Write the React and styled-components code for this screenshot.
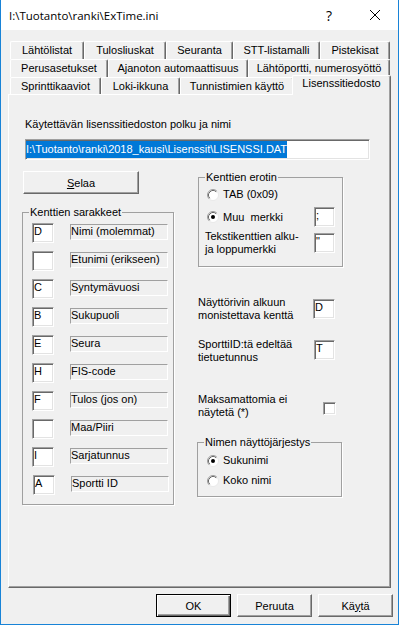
import React from 'react';
import styled, { createGlobalStyle } from 'styled-components';

const GlobalStyle = createGlobalStyle`
  html, body {
    margin: 0;
    padding: 0;
    background: #f0f0f0;
  }
  body {
    font-family: "Liberation Sans", Arial, sans-serif;
    font-size: 11px;
    color: #000;
  }
`;

const Window = styled.div`
  width: 399px;
  height: 625px;
  box-sizing: border-box;
  border: 1px solid #1883d7;
  border-top: none;
  background: #f0f0f0;
  display: flex;
  flex-direction: column;
`;

const TitleBar = styled.div`
  height: 30px;
  background: #fff;
  display: flex;
  align-items: center;
  font-family: "Open Sans", "Noto Sans", "DejaVu Sans", sans-serif;
  font-size: 11.5px;
`;

const Title = styled.div`
  flex: 1;
  padding-left: 8px;
  white-space: pre;
`;

const CaptionButton = styled.div`
  width: 46px;
  height: 30px;
  display: flex;
  align-items: center;
  justify-content: center;
  font-size: 14px;
`;

const Body = styled.div`
  padding: 11px 6px 0 7px;
  display: flex;
  flex-direction: column;
`;

const TabRow = styled.div`
  display: flex;
  height: ${p => p.$h || 18}px;
  padding-left: 2px;
`;

const Tab = styled.div`
  box-sizing: border-box;
  width: ${p => p.$w}px;
  height: ${p => (p.$selected ? p.$h + 3 : p.$h)}px;
  margin-top: ${p => (p.$selected ? -2 : 0)}px;
  margin-left: ${p => (p.$selected ? -2 : 0)}px;
  position: ${p => (p.$selected ? 'relative' : 'static')};
  z-index: ${p => (p.$selected ? 2 : 'auto')};
  background: #f0f0f0;
  border-top: 1px solid #fff;
  border-left: 1px solid #fff;
  border-right: 1px solid #696969;
  border-radius: 2px 2px 0 0;
  box-shadow: inset -1px 0 0 #a0a0a0;
  text-align: center;
  line-height: ${p => (p.$selected ? 15 : 17)}px;
  white-space: pre;
`;

const Panel = styled.div`
  box-sizing: border-box;
  width: 383px;
  height: 494px;
  border-top: 1px solid #fff;
  border-left: 1px solid #fff;
  border-right: 1px solid #696969;
  border-bottom: 1px solid #696969;
  box-shadow: inset -1px -1px 0 #a0a0a0;
  padding: 23px 0 0 13px;
`;

const PathLabel = styled.div`
  line-height: 13px;
  margin-left: 3px;
  margin-bottom: 8px;
`;

const Sunken = styled.div`
  box-sizing: border-box;
  background: #fff;
  border-style: solid;
  border-width: 1px;
  border-color: #a0a0a0 #fff #fff #a0a0a0;
  box-shadow: inset 1px 1px 0 #696969, inset -1px -1px 0 #e3e3e3;
  padding: 1px;
  line-height: 13px;
  white-space: pre;
`;

const PathInput = styled(Sunken)`
  width: 345px;
  height: 21px;
  margin-left: 3px;
  padding: 1px 0;
  line-height: 17px;
`;

const Selected = styled.span`
  display: inline-block;
  background: #0078d7;
  color: #fff;
  line-height: 17px;
`;

const Columns = styled.div`
  display: flex;
  gap: 24px;
  margin-top: 11px;
`;

const LeftCol = styled.div`
  width: 152px;
  display: flex;
  flex-direction: column;
`;

const RightCol = styled.div`
  width: 145px;
  display: flex;
  flex-direction: column;
`;

const Button = styled.button`
  box-sizing: border-box;
  width: ${p => p.$w || 75}px;
  height: 23px;
  margin: 0;
  padding: 0;
  font: inherit;
  color: #000;
  background: #f0f0f0;
  border-style: solid;
  border-width: 1px;
  border-color: ${p => (p.$default ? '#000' : '#fff #696969 #696969 #fff')};
  box-shadow: ${p =>
    p.$default
      ? 'inset 1px 1px 0 #fff, inset -1px -1px 0 #696969, inset -2px -2px 0 #a0a0a0'
      : 'inset -1px -1px 0 #a0a0a0'};
  display: flex;
  align-items: center;
  justify-content: center;
`;

const SelaaButton = styled(Button)`
  margin-left: 1px;
`;

const Group = styled.fieldset`
  box-sizing: border-box;
  width: ${p => p.$w}px;
  margin: ${p => p.$m || '0'};
  padding: ${p => p.$p};
  min-width: 0;
  border: 1px solid #a0a0a0;
  box-shadow: 1px 1px 0 #fff;
`;

const Legend = styled.legend`
  padding: 0 1px;
  margin-left: ${p => p.$ml || 0}px;
  line-height: 12px;
`;

const FieldList = styled.div`
  display: flex;
  flex-direction: column;
  gap: 8px;
`;

const FieldRow = styled.div`
  display: flex;
  align-items: flex-start;
  height: 20px;
  margin-left: ${p => (p.$shift ? 1 : 0)}px;
`;

const CodeBox = styled(Sunken)`
  width: ${p => p.$w || 22}px;
  height: 20px;
  margin-top: ${p => p.$mt || 0}px;
  flex-shrink: 0;
`;

const LabelBox = styled.div`
  box-sizing: border-box;
  width: 98px;
  height: 16px;
  margin: 1px 0 0 16px;
  border-style: solid;
  border-width: 1px;
  border-color: #a0a0a0 #fff #fff #a0a0a0;
  line-height: 13px;
  white-space: pre;
`;

const RadioRow = styled.div`
  display: flex;
  align-items: center;
  gap: 4px;
  height: ${p => p.$h || 13}px;
  padding-left: 2px;
  margin-top: ${p => p.$mt || 0}px;
  line-height: 13px;
  white-space: pre;
`;

const OptionRow = styled.div`
  display: flex;
  justify-content: space-between;
  align-items: ${p => p.$align || 'flex-start'};
  margin-top: ${p => p.$mt || 0}px;
  padding-right: ${p => (p.$pr === undefined ? 8 : p.$pr)}px;
`;

const Lines = styled.div`
  line-height: 13px;
  white-space: pre;
`;

const CheckBox = styled(Sunken)`
  width: 13px;
  height: 13px;
  padding: 0;
  margin-top: ${p => p.$mt || 0}px;
`;

const ButtonBar = styled.div`
  display: flex;
  justify-content: flex-end;
  gap: 6px;
  margin-top: 6px;
  margin-right: -1px;
`;

const Radio = ({ checked }) => (
  <svg width="12" height="12" viewBox="0 0 12 12">
    <circle cx="6" cy="6" r="5.5" fill="#fff" stroke="#e8e8e8" />
    <path d="M2.11 9.89 A5.5 5.5 0 0 1 9.89 2.11" fill="none" stroke="#a0a0a0" />
    <path d="M2.82 9.18 A4.5 4.5 0 0 1 9.18 2.82" fill="none" stroke="#696969" />
    {checked && <circle cx="6" cy="6" r="2" fill="#000" />}
  </svg>
);

const CloseIcon = () => (
  <svg width="10" height="10" viewBox="0 0 10 10">
    <path d="M0 0 L10 10 M10 0 L0 10" stroke="#000" strokeWidth="1" />
  </svg>
);

const tabRows = [
  { h: 18, tabs: [['Lähtölistat', 74], ['Tulosliuskat', 82], ['Seuranta', 67], ['STT-listamalli', 87], ['Pistekisat', 70]] },
  { h: 18, tabs: [['Perusasetukset', 98], ['Ajanoton automaattisuus', 140], ['Lähtöportti, numerosyöttö', 142]] },
  { h: 17, tabs: [['Sprinttikaaviot', 91], ['Loki-ikkuna', 79], ['Tunnistimien käyttö', 114], ['Lisenssitiedosto', 99, true]] },
];

const fields = [
  ['D', 'Nimi (molemmat)'],
  ['', 'Etunimi (erikseen)'],
  ['C', 'Syntymävuosi'],
  ['B', 'Sukupuoli'],
  ['E', 'Seura'],
  ['H', 'FIS-code'],
  ['F', 'Tulos (jos on)'],
  ['', 'Maa/Piiri'],
  ['I', 'Sarjatunnus'],
  ['A', 'Sportti ID'],
];

export default function App() {
  return (
    <>
      <GlobalStyle />
      <Window>
        <TitleBar>
          <Title>{'I:\\Tuotanto\\ranki\\ExTime.ini'}</Title>
          <CaptionButton>?</CaptionButton>
          <CaptionButton>
            <CloseIcon />
          </CaptionButton>
        </TitleBar>
        <Body>
          {tabRows.map((row, i) => (
            <TabRow key={i} $h={row.h}>
              {row.tabs.map(([label, w, sel]) => (
                <Tab key={label} $w={w} $h={row.h} $selected={sel}>
                  {label}
                </Tab>
              ))}
            </TabRow>
          ))}
          <Panel>
            <PathLabel>Käytettävän lisenssitiedoston polku ja nimi</PathLabel>
            <PathInput>
              <Selected>{'I:\\Tuotanto\\ranki\\2018_kausi\\Lisenssit\\LISENSSI.DAT'}</Selected>
            </PathInput>
            <Columns>
              <LeftCol>
                <SelaaButton $w={116}>
                  <span><u>S</u>elaa</span>
                </SelaaButton>
                <Group $w={152} $m="12px 0 0 0" $p="5px 0 9px 9px">
                  <Legend $ml={-3}>Kenttien sarakkeet</Legend>
                  <FieldList>
                    {fields.map(([code, label], i) => (
                      <FieldRow key={label} $shift={i === fields.length - 1}>
                        <CodeBox>{code}</CodeBox>
                        <LabelBox>{label}</LabelBox>
                      </FieldRow>
                    ))}
                  </FieldList>
                </Group>
              </LeftCol>
              <RightCol>
                <Group $w={145} $p="5px 7px 10px 6px">
                  <Legend>Kenttien erotin</Legend>
                  <RadioRow>
                    <Radio />
                    <span>TAB (0x09)</span>
                  </RadioRow>
                  <OptionRow $mt={6} $pr={0} $align="center">
                    <RadioRow $h={20}>
                      <Radio checked />
                      <span>Muu  merkki</span>
                    </RadioRow>
                    <CodeBox $w={21}>;</CodeBox>
                  </OptionRow>
                  <OptionRow $mt={3} $pr={0}>
                    <Lines>{'Tekstikenttien alku-\nja loppumerkki'}</Lines>
                    <CodeBox $w={21} $mt={3}>"</CodeBox>
                  </OptionRow>
                </Group>
                <OptionRow $mt={29}>
                  <Lines>{'Näyttörivin alkuun\nmonistettava kenttä'}</Lines>
                  <CodeBox $w={22} $mt={3}>D</CodeBox>
                </OptionRow>
                <OptionRow $mt={16}>
                  <Lines>{'SporttiID:tä edeltää\ntietuetunnus'}</Lines>
                  <CodeBox $w={21} $mt={2}>T</CodeBox>
                </OptionRow>
                <OptionRow $mt={29} $pr={7}>
                  <Lines>{'Maksamattomia ei\nnäytetä (*)'}</Lines>
                  <CheckBox $mt={9} />
                </OptionRow>
                <Group $w={145} $m="17px 0 0 -1px" $p="6px 0 9px 7px">
                  <Legend $ml={-1}>Nimen näyttöjärjestys</Legend>
                  <RadioRow>
                    <Radio checked />
                    <span>Sukunimi</span>
                  </RadioRow>
                  <RadioRow $mt={7}>
                    <Radio />
                    <span>Koko nimi</span>
                  </RadioRow>
                </Group>
              </RightCol>
            </Columns>
          </Panel>
          <ButtonBar>
            <Button $default>OK</Button>
            <Button>Peruuta</Button>
            <Button>
              <span>Kä<u>y</u>tä</span>
            </Button>
          </ButtonBar>
        </Body>
      </Window>
    </>
  );
}
